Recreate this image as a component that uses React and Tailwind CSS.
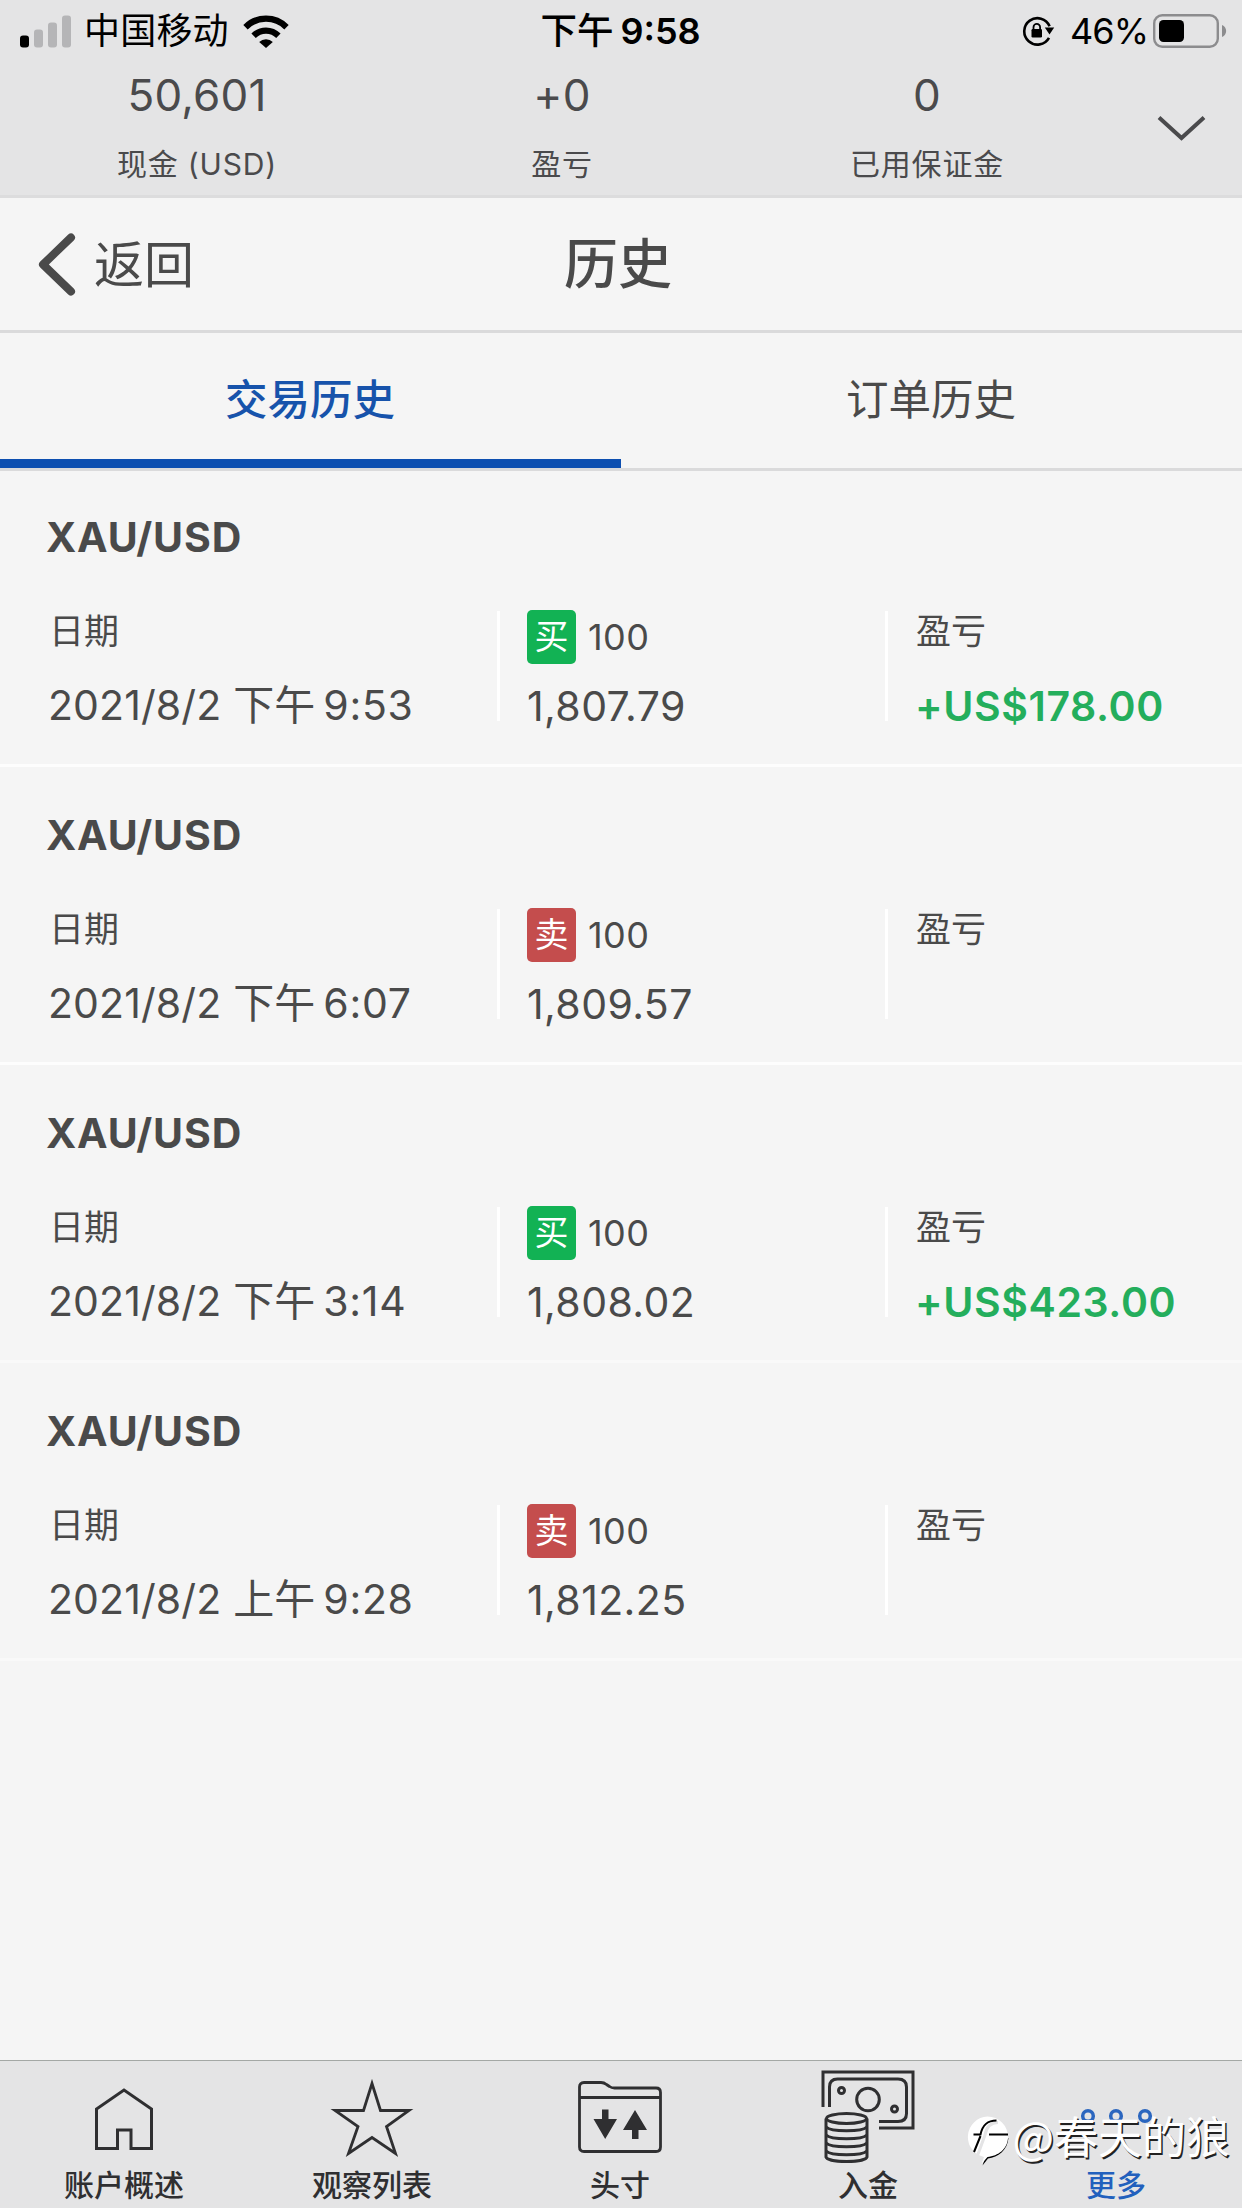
import React from 'react';

// --- DATA ---
const TRADES = [
    { symbol: 'XAU/USD', date: '2021/8/2', period: '下午', time: '9:53', side: 'buy', qty: '100', price: '1,807.79', pnl: '+US$178.00' },
    { symbol: 'XAU/USD', date: '2021/8/2', period: '下午', time: '6:07', side: 'sell', qty: '100', price: '1,809.57', pnl: '' },
    { symbol: 'XAU/USD', date: '2021/8/2', period: '下午', time: '3:14', side: 'buy', qty: '100', price: '1,808.02', pnl: '+US$423.00' },
    { symbol: 'XAU/USD', date: '2021/8/2', period: '上午', time: '9:28', side: 'sell', qty: '100', price: '1,812.25', pnl: '' },
];

// --- STATUS BAR ---
const SignalIcon = () => (
    <svg width="52" height="33" viewBox="0 0 52 33">
        <rect x="0" y="20.5" width="9" height="12" rx="3" fill="#000" />
        <rect x="14" y="14.5" width="9" height="18" rx="3" fill="#b5b5b7" />
        <rect x="28" y="7.5" width="9" height="25" rx="3" fill="#b5b5b7" />
        <rect x="42" y="0.5" width="9" height="32" rx="3" fill="#b5b5b7" />
    </svg>
);

const WifiIcon = () => (
    <svg width="46" height="33" viewBox="0 0 46 33">
        <g fill="none" stroke="#000" strokeWidth="6.2">
            <path d="M2.5 12.2a29 29 0 0 1 41 0" />
            <path d="M10.6 20.8a17.5 17.5 0 0 1 24.8 0" />
        </g>
        <path d="M16.2 27a9.8 9.8 0 0 1 13.6 0L23 33z" fill="#000" />
    </svg>
);

const RotationLockIcon = () => (
    <svg width="33" height="30" viewBox="0 0 33 30">
        <path d="M27 21.800A13.200 13.200 0 1 1 27.600 10.200" fill="none" stroke="#000" strokeWidth="2.600" />
        <path d="M22.800 11.500h9.400l-4.700 7z" fill="#000" />
        <rect x="9.500" y="13" width="10.500" height="8.500" rx="1.200" fill="#000" />
        <path d="M11.500 14v-2.800a3.300 3.300 0 0 1 6.600 0V14" fill="none" stroke="#000" strokeWidth="1.800" />
    </svg>
);

const BatteryIcon = () => (
    <svg width="74" height="34" viewBox="0 0 74 34">
        <rect x="1.200" y="1.200" width="63.600" height="31.600" rx="8" fill="none" stroke="#8c8c8e" strokeWidth="2.400" />
        <rect x="6" y="6" width="25" height="22" rx="4.500" fill="#000" />
        <path d="M69 11c5.500 2 5.500 10 0 12z" fill="#8c8c8e" />
    </svg>
);

const StatusBar = () => (
    <div className="flex h-[62px] items-center whitespace-nowrap text-[36px] leading-none text-black">
        <div className="flex w-[414px] items-center pl-5">
            <SignalIcon />
            <span className="ml-3 tracking-[0.2px]">中国移动</span>
            <span className="ml-[14px]"><WifiIcon /></span>
        </div>
        <div className="flex w-[414px] items-center justify-center pr-px">
            <span className="text-[36.5px] font-medium">下午</span>
            <span className="ml-[7px] font-semibold">9:58</span>
        </div>
        <div className="flex w-[414px] items-center justify-end pr-[15px]">
            <RotationLockIcon />
            <span className="ml-[15px] mr-[5px] tracking-[-1px]">46%</span>
            <BatteryIcon />
        </div>
    </div>
);

// --- ACCOUNT SUMMARY ---
const Metric = ({ value, label, className = '' }) => (
    <div className={`flex flex-col items-center whitespace-nowrap text-[#4a4a4c] ${className}`}>
        <div className="h-[66px] text-[44px] leading-[66px] tracking-[0.2px]">{value}</div>
        <div className="mt-[3px] h-[66px] text-[30px] leading-[66px] tracking-[0.8px]">{label}</div>
    </div>
);

const AccountSummary = () => (
    <div className="flex h-[134px]">
        <Metric className="w-[394px]" value="50,601" label="现金 (USD)" />
        <Metric className="w-[336px]" value="+0" label="盈亏" />
        <Metric className="w-[394px]" value="0" label="已用保证金" />
        <svg className="ml-[33px] mt-[51px]" width="50" height="32" viewBox="0 0 50 32">
            <path d="M2 4.500 24.500 25 47 4.500" fill="none" stroke="#4a4a4c" strokeWidth="4" />
        </svg>
    </div>
);

// --- NAVIGATION ---
const NavBar = () => (
    <div className="flex h-[135px] items-center border-b-[3px] border-[#dadadb] pt-[2px] text-[#4a4a4a]">
        <div className="flex w-[414px] items-center pl-[38px]">
            <svg width="38" height="64" viewBox="0 0 38 64">
                <path d="M33 4.500 5 31.500l28 27" fill="none" stroke="#4a4a4a" strokeWidth="8" strokeLinecap="round" strokeLinejoin="round" />
            </svg>
            <span className="ml-[18px] text-[50px] leading-none">返回</span>
        </div>
        <div className="w-[414px] pr-[6px] text-center text-[54px] font-medium leading-none">历史</div>
    </div>
);

const Tabs = () => (
    <div className="flex h-[138px] border-b-[3px] border-[#dadadb] text-[42.5px] leading-[133px]">
        <div className="w-1/2 border-b-[9px] border-[#0d4fb0] pr-px text-center font-medium text-[#1753ab]">交易历史</div>
        <div className="w-1/2 pr-px text-center text-[#4a4a4a]">订单历史</div>
    </div>
);

// --- TRADE LIST ---
const SideBadge = ({ side }) => (
    <span className={`flex h-[54px] w-[49px] shrink-0 items-center justify-center rounded-[5px] text-[34px] leading-none text-white ${side === 'buy' ? 'bg-[#12b254]' : 'bg-[#c44d4d]'}`}>
        {side === 'buy' ? '买' : '卖'}
    </span>
);

const TradeRow = ({ trade, faint }) => (
    <div className={`h-[298px] whitespace-nowrap border-b-[3px] text-[41px] text-[#4a4a4a] ${faint ? 'border-[#f9f9f9]' : 'border-[#fdfdfd]'}`}>
        <div className="h-[142px] pl-[46px] pt-[41px] font-bold leading-[54px] tracking-[0.85px]">{trade.symbol}</div>
        <div className="flex h-[110px]">
            <div className="w-[497px] pl-[48px]">
                <div className="mt-[2px] h-[36px] pl-px text-[35px] leading-[36px]">日期</div>
                <div className="mt-[23px] flex h-[66px] items-center leading-[66px]">
                    <span className="tracking-[0.1px]">{trade.date}</span>
                    <span className="ml-3">{trade.period}</span>
                    <span className="ml-2 tracking-[0.7px]">{trade.time}</span>
                </div>
            </div>
            <div className="w-[388px] border-l-[3px] border-white pl-[27px]">
                <div className="flex h-[52px] items-center">
                    <SideBadge side={trade.side} />
                    <span className="ml-[12px] text-[36px] leading-none tracking-[0.4px]">{trade.qty}</span>
                </div>
                <div className="mt-[10px] h-[66px] leading-[66px] tracking-[0.4px]">{trade.price}</div>
            </div>
            <div className="border-l-[3px] border-white pl-[27px]">
                <div className="mt-[2px] h-[36px] pl-px text-[35px] leading-[36px]">盈亏</div>
                <div className="mt-[24px] h-[66px] font-semibold leading-[66px] tracking-[0.6px] text-[#24ae5c]">{trade.pnl}</div>
            </div>
        </div>
    </div>
);

// --- BOTTOM BAR ---
const HomeIcon = () => (
    <svg width="58" height="62" viewBox="0 0 58 62">
        <path d="M1.500 60.500V21L29 2l27.500 19v39.500H36V42H22.500v18.500z" fill="none" stroke="#2f2f31" strokeWidth="3" />
    </svg>
);

const StarIcon = () => (
    <svg width="84" height="78" viewBox="0 0 84 78">
        <path d="M42 4.500 50.500 31.500H79L56.500 47.500 65.500 74.500 42 58.500 18.500 74.500 28 47.500 5 31.500H33.500z" fill="none" stroke="#2f2f31" strokeWidth="2.800" />
    </svg>
);

const PositionsIcon = () => (
    <svg width="84" height="72" viewBox="0 0 84 72">
        <g fill="none" stroke="#2f2f31" strokeWidth="2.800">
            <path d="M1.500 66V6q0-4.500 4.500-4.500h17q3 0 5.500 2l3 2q2 1.500 5 1.500H78q4.500 0 4.500 4.500V66q0 4.500-4.500 4.500H6Q1.500 70.500 1.500 66z" />
            <path d="M2 16.500h80" />
        </g>
        <path d="M24 28.500h6.500v9.500h8.500L27.200 58 15.500 38H24z M57 29 69 49h-8.500v9H54v-9h-9z" fill="#2f2f31" />
    </svg>
);

const DepositIcon = () => (
    <svg width="94" height="94" viewBox="0 0 94 94">
        <g fill="none" stroke="#2f2f31" strokeWidth="3">
            <path d="M2 37V2h90v56H58" />
            <path d="M8.500 37V17q0-8 8-8H77q8.500 0 8.500 8v26.500q0 8-8.500 8H58" />
            <circle cx="47" cy="29.500" r="11.300" />
            <circle cx="20.500" cy="20.500" r="3" />
            <circle cx="73.500" cy="39" r="3" />
            <ellipse cx="25.500" cy="48.500" rx="20" ry="5" />
            <path d="M5 48.500V87c2 6 39 6 41 0V48.500" />
            <path d="M5 57c5 5 36 5 41 0M5 65c5 5 36 5 41 0M5 73c5 5 36 5 41 0M5 81c5 5 36 5 41 0" />
        </g>
    </svg>
);

const MoreIcon = () => (
    <svg width="74" height="16" viewBox="0 0 74 16">
        <g fill="none" stroke="#2b66bf" strokeWidth="3.500">
            <circle cx="9" cy="8" r="5.300" />
            <circle cx="37" cy="8" r="5.300" />
            <circle cx="66" cy="8" r="5.300" />
        </g>
    </svg>
);

const BottomItem = ({ label, icon, active }) => (
    <div className={`flex flex-1 flex-col items-center whitespace-nowrap ${active ? 'text-[#2260bd]' : 'text-[#2f2f31]'}`}>
        <div className="flex h-[101px] items-center justify-center">{icon}</div>
        <div className="text-[30px] font-medium leading-[46px]">{label}</div>
    </div>
);

const BottomBar = () => (
    <div className="flex h-[148px] border-t border-[#a4a8a5] bg-[#e4e4e5] pr-[2px]">
        <BottomItem label="账户概述" icon={<div className="mt-[15px]"><HomeIcon /></div>} />
        <BottomItem label="观察列表" icon={<div className="mt-[12px]"><StarIcon /></div>} />
        <BottomItem label="头寸" icon={<div className="mt-[11px]"><PositionsIcon /></div>} />
        <BottomItem label="入金" icon={<div className="mt-[11px]"><DepositIcon /></div>} />
        <BottomItem label="更多" icon={<div className="mt-[9px]"><MoreIcon /></div>} active />
    </div>
);

const Watermark = () => (
    <div className="absolute bottom-[41px] right-[12px] flex items-center whitespace-nowrap text-white">
        <svg className="mr-px mt-[11px]" width="44" height="52" viewBox="0 0 44 52">
            <path d="M41.500 23C40.500 35 31 42.500 21 43.500L15.500 50.500l3-9z" fill="#000" />
            <path d="M20.500 1.500A20.500 20.500 0 0 1 41 22C41 34 31 41 20.500 42L14.500 49 17 42A20.500 20.500 0 0 1 20.500 1.500z" fill="#fff" />
            <path d="M31 7.500C23 7.500 19.500 12 18 20L10 42" fill="none" stroke="#e4e4e5" strokeWidth="3" />
            <path d="M29.500 5.500C20 5.500 15.500 10 13.500 19.500H6.500M22 19.500h19M13.500 21 7 37" fill="none" stroke="#000" strokeWidth="2" />
        </svg>
        <span className="font-['Noto_Sans_CJK_SC',sans-serif] text-[44px] leading-[64px] [text-shadow:1.5px_1.5px_0_#222]">@春天的狼</span>
    </div>
);

// --- MAIN APP COMPONENT ---
export default function App() {
    return (
        <div className="relative flex h-[2208px] w-[1242px] flex-col overflow-hidden bg-[#f5f5f5] font-[Inter,'Noto_Sans_CJK_SC',sans-serif]">
            <header className="h-[198px] border-b-[3px] border-[#dcdcdd] bg-[#e4e4e5]">
                <StatusBar />
                <AccountSummary />
            </header>
            <NavBar />
            <Tabs />
            <main className="-mt-0.5 flex-1">
                {TRADES.map((trade, i) => <TradeRow key={trade.time} trade={trade} faint={i > 1} />)}
            </main>
            <BottomBar />
            <Watermark />
        </div>
    );
}
